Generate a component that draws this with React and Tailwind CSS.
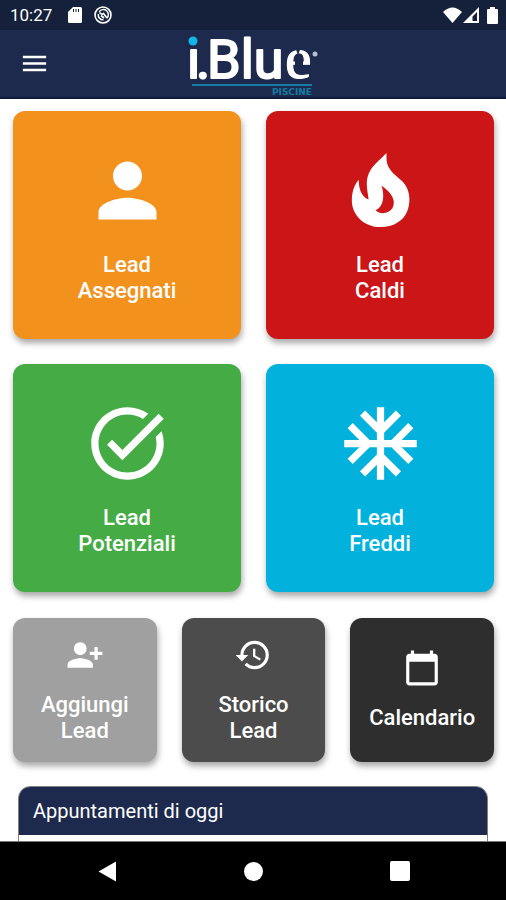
import { MdAcUnit, MdCalendarToday, MdHistory, MdMenu, MdPerson, MdPersonAddAlt1, MdTaskAlt } from 'react-icons/md';

function FlameIcon({ size }) {
  return (
    <svg width={size} height={size} viewBox="0 0 88 88" fill="currentColor" aria-hidden="true">
      <path
        fillRule="evenodd"
        d="M50 6C50 12 50 16 52 20C57 30 67 32 71 42C74 49 74 58 71 65C67 75 57 81 44 81C28 81 15 69 15 54C15 45 18 37 22 33C22 41 24 50 32 53C31 45 29 37 31 30C34 19 43 14 50 6Z M45 39C48 48 48 60 39 64C44 69 53 67 56 62C61 53 53 45 45 39Z"
      />
    </svg>
  );
}

const mainTiles = [
  { label: ['Lead', 'Assegnati'], icon: MdPerson, color: 'bg-[#f3911d]' },
  { label: ['Lead', 'Caldi'], icon: FlameIcon, color: 'bg-[#cc1517]' },
  { label: ['Lead', 'Potenziali'], icon: MdTaskAlt, color: 'bg-[#45ac45]' },
  { label: ['Lead', 'Freddi'], icon: MdAcUnit, color: 'bg-[#02b2dd]' },
];

const smallTiles = [
  { label: ['Aggiungi', 'Lead'], icon: MdPersonAddAlt1, color: 'bg-[#a0a0a0]' },
  { label: ['Storico', 'Lead'], icon: MdHistory, color: 'bg-[#4c4c4c]' },
  { label: ['Calendario'], icon: MdCalendarToday, color: 'bg-[#2e2e2e]' },
];

function Tile({ label, icon: Icon, color, iconSize }) {
  return (
    <button
      type="button"
      className={`${color} aspect-square rounded-xl flex flex-col items-center justify-center gap-[18px] text-white text-[22px] leading-[26px] font-medium shadow-[1px_4px_6px_rgba(0,0,0,0.35)]`}
    >
      <Icon size={iconSize} />
      <span className="flex flex-col items-center">
        {label.map((line) => (
          <span key={line}>{line}</span>
        ))}
      </span>
    </button>
  );
}

function StatusBar() {
  return (
    <div className="h-[30px] flex-none bg-[#15203a] text-white flex items-center justify-between pl-[10px] pr-2">
      <div className="flex items-center gap-3">
        <span className="text-[17px] leading-5 mr-1">10:27</span>
        <svg width="14" height="16" viewBox="0 0 14 16" aria-hidden="true">
          <path d="M5 0H12.500Q14 0 14 1.500V14.500Q14 16 12.500 16H1.500Q0 16 0 14.500V5Z" fill="#fff" />
          <path d="M5.500 2v3M8 2v3M10.500 2v3" stroke="#15203a" />
        </svg>
        <svg width="18" height="18" viewBox="0 0 18 18" fill="none" stroke="#fff" aria-hidden="true">
          <circle cx="9" cy="9" r="8" strokeWidth="1.600" />
          <path d="M5.200 5.800A5 5 0 1 1 12.800 12.200M4.300 8A5 5 0 0 0 9.500 13.800" strokeWidth="1.500" />
          <path d="M5.500 6.500Q8 9 9.500 7.500L13 12M7 9.500L10 12" strokeWidth="1.700" />
        </svg>
      </div>
      <div className="flex items-center">
        <svg width="19" height="17" viewBox="0 0 19 17" fill="#fff" aria-hidden="true">
          <path d="M0 5Q9.500 -4 19 5L9.500 16Z" />
        </svg>
        <svg className="ml-px" width="16" height="16" viewBox="0 0 16 16" aria-hidden="true">
          <path fillRule="evenodd" d="M16 0V16H0ZM14 5L9.500 9.500V14H14Z" fill="#fff" />
        </svg>
        <svg className="ml-2" width="11" height="17" viewBox="0 0 11 17" fill="#fff" aria-hidden="true">
          <path d="M3 0H8V2H10Q11 2 11 3V16Q11 17 10 17H1Q0 17 0 16V3Q0 2 1 2H3Z" />
        </svg>
      </div>
    </div>
  );
}

function Logo() {
  return (
    <svg className="overflow-visible" width="130" height="64" viewBox="0 0 130 64" role="img" aria-label="i.Blue Piscine">
      <text
        y="46"
        fontFamily="Roboto, sans-serif"
        fontSize="54"
        fill="#fff"
        stroke="#fff"
        strokeWidth="2"
        strokeLinejoin="round"
      >
        <tspan x="-1">i</tspan>
        <tspan x="8">.</tspan>
        <tspan x="19">Blu</tspan>
        <tspan x="97" fontFamily="'Liberation Serif', serif" fontSize="60" strokeWidth="1">e</tspan>
      </text>
      {/* The e is open at the top and in its bar */}
      <path d="M107 15L113 15L110 23ZM107 27H115V36H107Z" fill="#1d2a4d" />
      <rect x="0" y="2" width="12" height="12" fill="#1d2a4d" />
      <circle cx="5" cy="9" r="4.500" fill="#12b5e5" />
      <circle cx="127" cy="22" r="2.500" fill="#b9bfd0" />
      <path d="M4 53H124" stroke="#147ba3" strokeWidth="2" />
      <text x="124" y="63" textAnchor="end" fontFamily="'DejaVu Sans', sans-serif" fontSize="9" fontWeight="700" fill="#147ba3">
        PISCINE
      </text>
    </svg>
  );
}

function Header() {
  return (
    <header className="h-[69px] flex-none bg-[#1d2a4d] border-b-2 border-[#101a3a] text-white grid grid-cols-[1fr_auto_1fr] items-center">
      <button type="button" aria-label="Menu" className="ml-[19px] justify-self-start">
        <MdMenu size={31} />
      </button>
      <Logo />
    </header>
  );
}

function NavBar() {
  return (
    <nav className="h-[59px] flex-none bg-black border-t border-[#777777] grid grid-cols-[1fr_auto_1fr] items-center gap-[127px]">
      <button type="button" aria-label="Indietro" className="justify-self-end">
        <svg width="19" height="21" viewBox="0 0 19 21" fill="#fff">
          <path d="M18 0.500V20.500L0.500 10.500Z" />
        </svg>
      </button>
      <button type="button" aria-label="Home" className="size-[19px] rounded-full bg-white" />
      <button type="button" aria-label="Recenti" className="size-5 rounded-xs bg-white" />
    </nav>
  );
}

function App() {
  return (
    <div className="h-screen flex flex-col overflow-hidden bg-white font-['Roboto',sans-serif]">
      <StatusBar />
      <Header />

      <main className="flex-1 min-h-0 overflow-hidden">
        <div className="pl-[13px] pr-3 pt-3 flex flex-col gap-[26px]">
          <div className="grid grid-cols-2 gap-[25px]">
            {mainTiles.map((tile) => (
              <Tile key={tile.label.join(' ')} {...tile} iconSize={87} />
            ))}
          </div>
          <div className="grid grid-cols-3 gap-[25px]">
            {smallTiles.map((tile) => (
              <Tile key={tile.label.join(' ')} {...tile} iconSize={38} />
            ))}
          </div>
        </div>

        {/* Today's appointments */}
        <section className="mx-[18px] mt-6 h-40 rounded-xl border border-[#808080] overflow-hidden">
          <h2 className="bg-[#1d2a4d] text-white text-xl leading-6 px-[14px] py-3">Appuntamenti di oggi</h2>
        </section>
      </main>

      <NavBar />
    </div>
  );
}

export default App;
